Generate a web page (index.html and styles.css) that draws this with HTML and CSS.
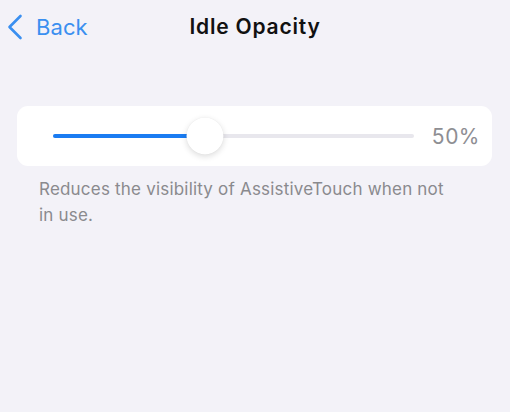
FILE: index.html
```html
<!DOCTYPE html>
<html>
<head>
<meta charset="utf-8">
<link rel="stylesheet" href="styles.css">
</head>
<body>
<div class="screen">
  <header class="nav">
    <a class="back">
      <svg class="chev" width="16" height="26" viewBox="0 0 16 26"><path d="M13.5 2 L2.5 13 L13.5 24" fill="none" stroke="#3a8ff0" stroke-width="2.6" stroke-linecap="round" stroke-linejoin="round"/></svg>
      <span>Back</span>
    </a>
    <h1 class="title">Idle Opacity</h1>
  </header>
  <section class="card">
    <div class="slider">
      <div class="track">
        <div class="fill" style="width:42%"></div>
        <div class="thumb" style="left:42%"></div>
      </div>
    </div>
    <span class="value">50%</span>
  </section>
  <p class="footer">Reduces the visibility of AssistiveTouch when not in use.</p>
</div>
</body>
</html>
```
FILE: styles.css
```css
html, body {
  margin: 0;
  padding: 0;
  background: #f3f2f8;
}
.screen {
  width: 510px;
  height: 412px;
  font-family: Inter, "Liberation Sans", sans-serif;
  box-sizing: border-box;
  padding-top: 13px;
}
.nav {
  position: relative;
  height: 28px;
  display: flex;
  align-items: center;
}
.back {
  display: flex;
  align-items: center;
  gap: 13px;
  padding-left: 7px;
  color: #3a8ff0;
  font-size: 22px;
  letter-spacing: 0.1px;
}
.chev { display: block; }
.title {
  position: absolute;
  left: 0;
  right: 0;
  top: 0;
  margin: 0;
  text-align: center;
  font-size: 21px;
  font-weight: 600;
  line-height: 28px;
  color: #111;
  letter-spacing: 0.8px;
}
.card {
  margin: 65px 18px 0 17px;
  height: 60px;
  background: #fff;
  border-radius: 11px;
  display: flex;
  align-items: center;
  padding: 0 12px 0 36px;
  box-sizing: border-box;
}
.slider {
  flex: 1;
  padding-right: 14px;
}
.track {
  position: relative;
  height: 4px;
  border-radius: 2px;
  background: #e8e7ed;
}
.fill {
  height: 100%;
  border-radius: 2px;
  background: #1a7cf2;
}
.thumb {
  position: absolute;
  top: 50%;
  width: 37px;
  height: 37px;
  border-radius: 50%;
  background: #fff;
  transform: translate(-50%, -50%);
  box-shadow: 0 2px 6px rgba(0,0,0,0.14), 0 0 1px rgba(0,0,0,0.08);
}
.value {
  font-size: 21px;
  color: #8e8e93;
  width: 52px;
  text-align: right;
  letter-spacing: 0.5px;
}
.footer {
  margin: 10px 58px 0 39px;
  font-size: 17px;
  line-height: 26px;
  color: #8a8a8e;
  letter-spacing: 0.2px;
}
```
